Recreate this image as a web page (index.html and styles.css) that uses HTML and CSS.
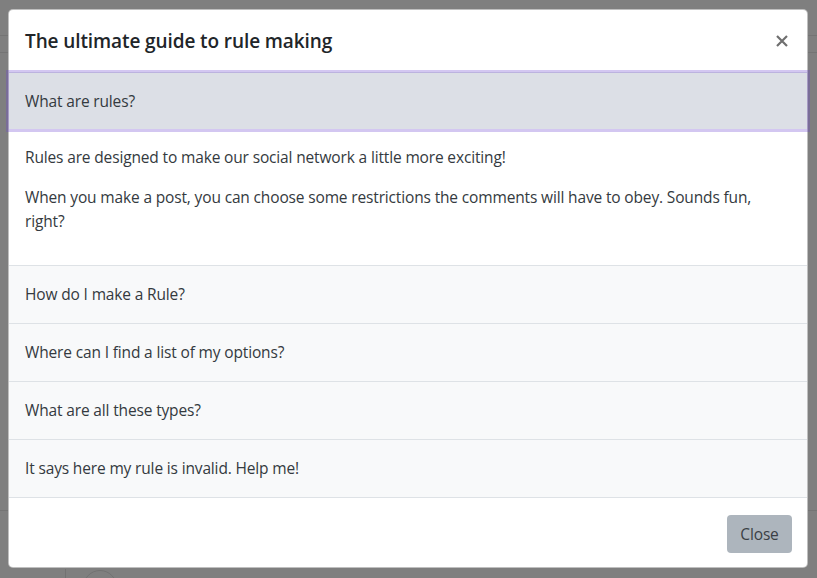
FILE: index.html
```html
<!DOCTYPE html>
<html lang="en">
<head>
<meta charset="utf-8">
<title>Rule guide</title>
<link rel="stylesheet" href="styles.css">
</head>
<body>
<div class="page">
  <div class="page-nav"></div>
  <div class="page-subnav"></div>
  <div class="page-foot-line"></div>
  <div class="page-rail"></div>
  <div class="page-avatar"></div>
</div>
<div class="backdrop"></div>
<div class="modal">
  <div class="modal-header">
    <h5 class="modal-title">The ultimate guide to rule making</h5>
    <button class="btn-close" aria-label="Close">
      <svg width="12" height="12" viewBox="0 0 12 12"><path d="M1 1L11 11M11 1L1 11" stroke="#6f6f6f" stroke-width="2.2" stroke-linecap="butt"/></svg>
    </button>
  </div>
  <div class="accordion">
    <div class="acc-item">
      <button class="acc-btn active">What are rules?</button>
      <div class="acc-body">
        <p>Rules are designed to make our social network a little more exciting!</p>
        <p>When you make a post, you can choose some restrictions the comments will have to obey. Sounds fun, right?</p>
      </div>
    </div>
    <div class="acc-item"><button class="acc-btn">How do I make a Rule?</button></div>
    <div class="acc-item"><button class="acc-btn">Where can I find a list of my options?</button></div>
    <div class="acc-item"><button class="acc-btn">What are all these types?</button></div>
    <div class="acc-item"><button class="acc-btn">It says here my rule is invalid. Help me!</button></div>
  </div>
  <div class="modal-footer">
    <button class="btn-secondary">Close</button>
  </div>
</div>
</body>
</html>
```

FILE: styles.css
```css
* { box-sizing: border-box; }
html, body {
  margin: 0;
  height: 100%;
}
body {
  background: #7f7f7f;
  font-family: "Open Sans", "Noto Sans", sans-serif;
  color: #212529;
  overflow: hidden;
  position: relative;
}
.page {
  position: absolute;
  inset: 0;
}
.page-nav {
  height: 36px;
  border-bottom: 1px solid #747474;
}
.page-subnav {
  height: 17px;
  border-bottom: 1px solid #747474;
}
.page-foot-line {
  position: absolute;
  left: 0;
  right: 0;
  top: 510px;
  border-top: 1px solid #747474;
}
.page-rail {
  position: absolute;
  left: 65px;
  top: 569px;
  bottom: 0;
  border-left: 1px solid #727272;
}
.page-avatar {
  position: absolute;
  left: 83px;
  top: 570px;
  width: 34px;
  height: 34px;
  border: 1px solid #727272;
  border-radius: 50%;
}
.backdrop {
  position: absolute;
  inset: 0;
}
.modal {
  position: absolute;
  left: 8px;
  top: 9px;
  width: 800px;
  background: #fff;
  border: 1px solid rgba(0, 0, 0, 0.25);
  border-radius: 5px;
}
.modal-header {
  display: flex;
  align-items: center;
  justify-content: space-between;
  padding: 16px 16px;
  border-bottom: 1px solid #dee2e6;
}
.modal-title {
  margin: 0;
  font-size: 19px;
  font-weight: 600;
  letter-spacing: -0.1px;
  line-height: 30px;
  color: #212529;
}
.btn-close {
  border: 0;
  background: transparent;
  padding: 0;
  margin-right: 3px;
  width: 12px;
  height: 12px;
  display: flex;
}
.acc-item {
  border-bottom: 1px solid #dee2e6;
}
.acc-btn {
  display: block;
  width: 100%;
  text-align: left;
  border: 0;
  background: #f8f9fa;
  padding: 16px 16px;
  font-family: inherit;
  font-size: 15.5px;
  letter-spacing: -0.15px;
  line-height: 25px;
  color: #343a40;
}
.acc-btn.active {
  position: relative;
  z-index: 2;
  background: #dcdfe6;
  line-height: 24px;
  box-shadow: 0 0 0 3px rgba(110, 70, 210, 0.3);
}
.acc-body {
  padding: 16px 16px;
  font-size: 15.5px;
  letter-spacing: -0.15px;
  line-height: 24px;
  color: #343a40;
}
.acc-body p {
  margin: 0 0 16px;
}
.modal-footer {
  display: flex;
  justify-content: flex-end;
  padding: 17px 15px 14px;
}
.btn-secondary {
  font-family: inherit;
  font-size: 15.5px;
  letter-spacing: -0.15px;
  line-height: 24px;
  padding: 7px 12px;
  min-width: 65px;
  border: 0;
  border-radius: 4px;
  background: #adb5bd;
  color: #3a3f45;
}
```
